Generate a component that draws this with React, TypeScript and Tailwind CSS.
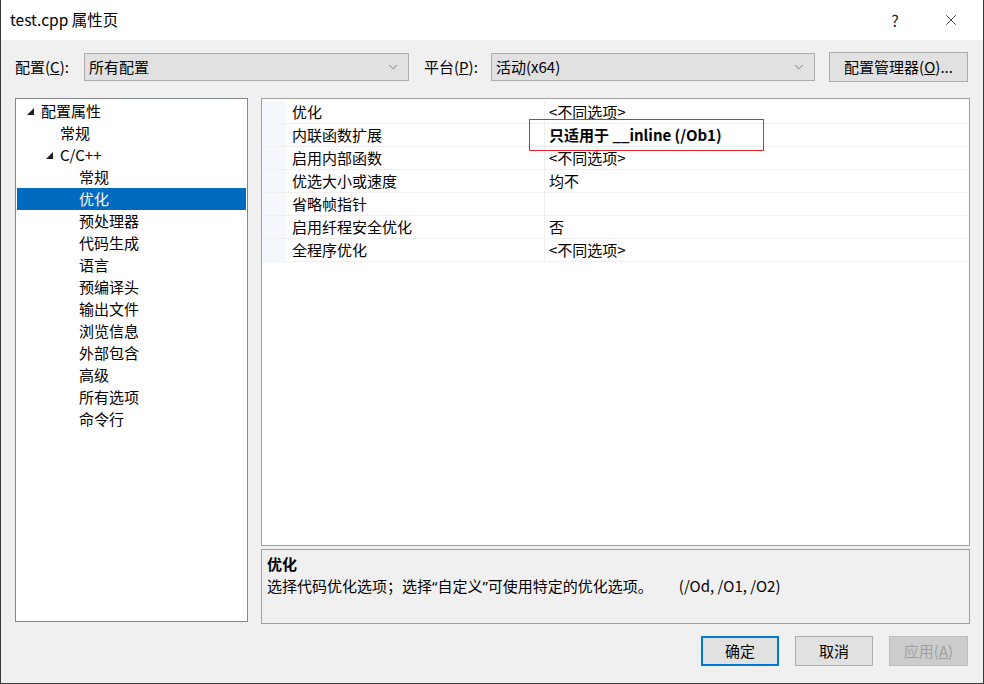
import { ChevronDown, X } from "lucide-react";

const FONT = { fontFamily: '"Noto Sans CJK SC", "Noto Sans", sans-serif' };
const LATIN = { fontFamily: '"Noto Sans", sans-serif' };

type TreeItem = { label: string; level: number; expanded?: boolean; selected?: boolean };

const TREE: TreeItem[] = [
  { label: "配置属性", level: 0, expanded: true },
  { label: "常规", level: 1 },
  { label: "C/C++", level: 1, expanded: true },
  { label: "常规", level: 2 },
  { label: "优化", level: 2, selected: true },
  { label: "预处理器", level: 2 },
  { label: "代码生成", level: 2 },
  { label: "语言", level: 2 },
  { label: "预编译头", level: 2 },
  { label: "输出文件", level: 2 },
  { label: "浏览信息", level: 2 },
  { label: "外部包含", level: 2 },
  { label: "高级", level: 2 },
  { label: "所有选项", level: 2 },
  { label: "命令行", level: 2 },
];

const PROPS: { name: string; value: string; bold?: boolean }[] = [
  { name: "优化", value: "<不同选项>" },
  { name: "内联函数扩展", value: "只适用于 __inline (/Ob1)", bold: true },
  { name: "启用内部函数", value: "<不同选项>" },
  { name: "优选大小或速度", value: "均不" },
  { name: "省略帧指针", value: "" },
  { name: "启用纤程安全优化", value: "否" },
  { name: "全程序优化", value: "<不同选项>" },
];

const INDENT = ["pl-[9px]", "pl-[28px]", "pl-[47px]"];

function Triangle() {
  return (
    <svg width="9" height="9" viewBox="0 0 9 9" className="mr-[6px] shrink-0">
      <path d="M8 1 L8 8 L1 8 Z" fill="#1e1e1e" />
    </svg>
  );
}

function Dropdown({ value, width }: { value: string; width: string }) {
  return (
    <div
      className={`${width} h-[28px] flex items-center justify-between border border-[#adadad] bg-[#e1e1e1] pl-[4px] pr-[8px] text-[15px] text-black`}
    >
      <span>{value}</span>
      <ChevronDown size={14} strokeWidth={1.2} color="#555" />
    </div>
  );
}

export default function App() {
  return (
    <div
      className="w-[984px] h-[684px] flex flex-col bg-[#f0f0f0] border-l border-r border-b border-[#3a3a3a] overflow-hidden text-black"
      style={FONT}
    >
      {/* title bar */}
      <div className="h-[40px] shrink-0 bg-white flex items-center pl-[9px] text-[15.5px]">
        <span className="flex-1">test.cpp 属性页</span>
        <span className="w-[56px] text-center text-[16px] text-[#222]">?</span>
        <span className="w-[56px] flex justify-center mr-[4px]">
          <X size={18} strokeWidth={1.1} color="#222" />
        </span>
      </div>

      {/* config row */}
      <div className="mt-[12px] h-[30px] flex items-center pl-[14px] text-[15px]">
        <span className="w-[69px]">
          配置(<span className="underline">C</span>):
        </span>
        <Dropdown value="所有配置" width="w-[325px]" />
        <span className="ml-[15px] w-[67px]">
          平台(<span className="underline">P</span>):
        </span>
        <Dropdown value="活动(x64)" width="w-[324px]" />
        <div className="ml-[14px] w-[139px] h-[30px] flex items-center justify-center border border-[#adadad] bg-[#e1e1e1]">
          配置管理器(<span className="underline">O</span>)...
        </div>
      </div>

      {/* main */}
      <div className="mt-[16px] flex pl-[14px] gap-[13px]">
        <div className="w-[233px] h-[524px] bg-white border border-[#828790] pt-[1px] px-[1px]">
          {TREE.map((t, i) => (
            <div
              key={i}
              className={`h-[22px] flex items-center text-[15px] ${INDENT[t.level]} ${
                t.selected ? "bg-[#0069c0] text-white" : ""
              }`}
            >
              {t.expanded ? <Triangle /> : <span className="w-[15px] shrink-0" />}
              <span>{t.label}</span>
            </div>
          ))}
        </div>

        <div className="w-[709px] flex flex-col gap-[3px]">
          <div className="h-[448px] bg-white border border-[#a0a0a0] pt-[2px] relative">
            {PROPS.map((p, i) => (
              <div key={i} className="h-[23px] flex border-b border-[#f0f0f0] text-[15px]">
                <div className="w-[24px] bg-[#f4f7fc]" />
                <div className="w-[259px] flex items-center pl-[6px] border-r border-[#f0f0f0]">
                  {p.name}
                </div>
                <div className={`flex-1 flex items-center pl-[4px] ${p.bold ? "font-bold" : ""}`}>
                  {p.value}
                </div>
              </div>
            ))}
            <div className="absolute left-[267px] top-[20px] w-[235px] h-[32px] border border-[#e8262c]" />
          </div>

          <div className="h-[75px] border border-[#a0a0a0] bg-[#f0f0f0] px-[5px] pt-[3px] text-[15px]">
            <div className="font-bold leading-[22px]">优化</div>
            <div className="leading-[22px] flex">
              <span>
                选择代码优化选项；选择<span style={LATIN}>“</span>自定义<span style={LATIN}>”</span>
                可使用特定的优化选项。
              </span>
              <span className="ml-[26px]">(/Od, /O1, /O2)</span>
            </div>
          </div>
        </div>
      </div>

      {/* buttons */}
      <div className="mt-[12px] flex justify-end pr-[15px] gap-[16px] text-[15px]">
        <div className="w-[78px] h-[30px] flex items-center justify-center border-2 border-[#0078d7] bg-[#e1e1e1]">
          确定
        </div>
        <div className="w-[78px] h-[30px] flex items-center justify-center border border-[#adadad] bg-[#e1e1e1]">
          取消
        </div>
        <div className="w-[79px] h-[30px] flex items-center justify-center border border-[#bfbfbf] bg-[#cccccc] text-[#a0a0a0]">
          应用(<span className="underline">A</span>)
        </div>
      </div>
    </div>
  );
}
